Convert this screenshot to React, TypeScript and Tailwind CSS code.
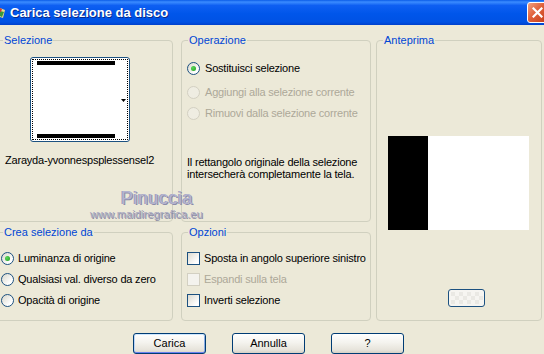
import type { ReactNode } from 'react'

const font = { fontFamily: '"Liberation Sans", Arial, sans-serif' }

function Group({
  title,
  className = '',
  children,
}: {
  title: string
  className?: string
  children?: ReactNode
}) {
  return (
    <div className={`relative rounded-[4px] border border-[#D0D0BF] ${className}`}>
      <span className="absolute -top-[7px] left-[6px] bg-[#ECE9D8] px-[1px] text-[11px] leading-[13px] text-[#0046D5]">
        {title}
      </span>
      {children}
    </div>
  )
}

function Radio({ checked = false, disabled = false }: { checked?: boolean; disabled?: boolean }) {
  return (
    <span
      className={`flex h-[13px] w-[13px] shrink-0 items-center justify-center rounded-full border ${
        disabled
          ? 'border-[#D3D0C2] bg-[#EFEDE2]'
          : 'border-[#1C5180] bg-[linear-gradient(135deg,#D9D7CB,#FFFFFF_75%)]'
      }`}
    >
      {checked && (
        <span className="h-[5px] w-[5px] rounded-full bg-[radial-gradient(circle_at_35%_35%,#5BD65B,#1E9E1E)]" />
      )}
    </span>
  )
}

function Check({ disabled = false }: { disabled?: boolean }) {
  return (
    <span
      className={`block h-[13px] w-[13px] shrink-0 border ${
        disabled
          ? 'border-[#D3D0C2] bg-[#F4F3EE]'
          : 'border-[#1C5180] bg-[linear-gradient(135deg,#DCDAD0,#FFFFFF_80%)]'
      }`}
    />
  )
}

function Option({
  control,
  label,
  disabled = false,
  gap = 'gap-[4px]',
}: {
  control: ReactNode
  label: string
  disabled?: boolean
  gap?: string
}) {
  return (
    <div className={`flex h-[13px] items-center ${gap}`}>
      {control}
      <span
        className={`whitespace-nowrap text-[11px] leading-[13px] tracking-[-0.2px] ${
          disabled ? 'text-[#ACA899]' : 'text-black'
        }`}
      >
        {label}
      </span>
    </div>
  )
}

function XpButton({ label, primary = false }: { label: string; primary?: boolean }) {
  return (
    <button
      className={`h-[21px] w-[73px] rounded-[3px] border border-[#003C74] bg-[linear-gradient(to_bottom,#FFFFFF,#F4F3EE_45%,#E6E3DA_85%,#D6D0C5)] text-[11px] text-black ${
        primary
          ? 'shadow-[inset_0_1px_0_#CEE7FF,inset_0_-1px_0_#6982EE,inset_1px_0_0_#BCD4F6,inset_-1px_0_0_#89ADE4]'
          : ''
      }`}
    >
      {label}
    </button>
  )
}

export default function App() {
  return (
    <div className="h-[354px] w-[544px] overflow-hidden bg-[#ECE9D8]" style={font}>
      {/* Title bar */}
      <div className="flex h-[25px] items-center bg-[linear-gradient(to_bottom,#0A5CE8_0%,#3B8CFF_8%,#0E5FF2_22%,#0056EA_55%,#0052E4_88%,#0040CC_100%)]">
        <svg width="6" height="14" viewBox="0 0 6 14" className="ml-0">
          <path d="M0 2 L5 4 L3 12 L0 11 Z" fill="#E8D890" />
          <path d="M0 5 L4 6 L2 11 L0 10 Z" fill="#3A9A3A" />
          <path d="M0 2 L2 3 L1 6 L0 6 Z" fill="#D04030" />
        </svg>
        <span className="ml-[4px] text-[13px] font-bold text-white [text-shadow:1px_1px_0_#0A2A8A]">
          Carica selezione da disco
        </span>
        <div className="ml-auto mr-[-4px] flex h-[21px] w-[21px] items-center justify-center rounded-[3px] border border-white bg-[linear-gradient(135deg,#F0A080,#E0603A_45%,#C33C18)]">
          <svg width="11" height="11" viewBox="0 0 11 11">
            <path d="M1.5 1.5 L9.5 9.5 M9.5 1.5 L1.5 9.5" stroke="white" strokeWidth="2.2" strokeLinecap="square" />
          </svg>
        </div>
      </div>

      {/* Body */}
      <div className="relative">
        <div className="ml-[-4px] flex pt-[15px]">
          <div className="grid grid-cols-[177px_190px] grid-rows-[182px_89px] gap-x-[8px] gap-y-[10px]">
            <Group title="Selezione">
              <div className="flex flex-col pl-[8px] pt-[16px]">
                <div className="relative ml-[25px] flex h-[85px] w-[100px] items-center justify-center rounded-[3px] border border-[#1C5180] bg-white">
                  <div className="flex h-[81px] w-[96px] flex-col justify-between border border-dotted border-black px-[4px] py-[1px]">
                    <div className="h-[4px] w-[78px] bg-black" />
                    <div className="h-[4px] w-[78px] bg-black" />
                  </div>
                  <svg width="5" height="3" viewBox="0 0 5 3" className="absolute right-[3px] top-[41px]">
                    <path d="M0 0 H5 L2.5 3 Z" fill="black" />
                  </svg>
                </div>
                <span className="mt-[12px] text-[11px] leading-[13px] tracking-[-0.2px] text-black">
                  Zarayda-yvonnespsplessensel2
                </span>
              </div>
            </Group>

            <Group title="Operazione">
              <div className="flex flex-col pl-[5px] pt-[21px]">
                <Option control={<Radio checked />} label="Sostituisci selezione" gap="gap-[5px]" />
                <div className="mt-[11px]">
                  <Option control={<Radio disabled />} label="Aggiungi alla selezione corrente" disabled gap="gap-[5px]" />
                </div>
                <div className="mt-[8px]">
                  <Option control={<Radio disabled />} label="Rimuovi dalla selezione corrente" disabled gap="gap-[5px]" />
                </div>
                <p className="mt-[36px] text-[11px] leading-[12px] tracking-[-0.2px] text-black">
                  Il rettangolo originale della selezione
                  <br />
                  intersecherà completamente la tela.
                </p>
              </div>
            </Group>

            <Group title="Crea selezione da">
              <div className="flex flex-col gap-[8px] pl-[4px] pt-[19px]">
                <Option control={<Radio checked />} label="Luminanza di origine" />
                <Option control={<Radio />} label="Qualsiasi val. diverso da zero" />
                <Option control={<Radio />} label="Opacità di origine" />
              </div>
            </Group>

            <Group title="Opzioni">
              <div className="flex flex-col gap-[8px] pl-[5px] pt-[19px]">
                <Option control={<Check />} label="Sposta in angolo superiore sinistro" />
                <Option control={<Check disabled />} label="Espandi sulla tela" disabled />
                <Option control={<Check />} label="Inverti selezione" />
              </div>
            </Group>
          </div>

          <Group title="Anteprima" className="ml-[5px] h-[281px] w-[166px]">
            <div className="flex flex-col pl-[11px] pt-[95px]">
              <div className="flex h-[94px] w-[141px]">
                <div className="w-[40px] bg-black" />
                <div className="flex-1 bg-white" />
              </div>
              <div className="ml-[60px] mt-[59px] flex h-[18px] w-[37px] items-center justify-center rounded-[3px] border border-[#1C5180] bg-[#F6F5F1]">
                <svg width="33" height="14" viewBox="0 0 33 14">
                  {[0, 1, 2, 3, 4, 5, 6, 7].map((c) =>
                    [0, 1, 2].map((r) =>
                      (c + r) % 2 === 0 ? (
                        <rect key={`${c}-${r}`} x={c * 4 + 1} y={r * 4 + 1} width="4" height="4" fill="#EAE9E4" />
                      ) : null,
                    ),
                  )}
                </svg>
              </div>
            </div>
          </Group>
        </div>

        {/* Buttons */}
        <div className="ml-[133px] mt-[12px] flex gap-[26px]">
          <XpButton label="Carica" primary />
          <XpButton label="Annulla" />
          <XpButton label="?" />
        </div>

        {/* Watermark */}
        <div className="pointer-events-none absolute left-[90px] top-[163px] flex flex-col items-start">
          <span className="ml-[31px] text-[18px] leading-[20px] tracking-[0.5px] text-[#B4B4D0] [text-shadow:1px_1px_0_#8C8CAA,-1px_0_0_#9C9CB8]">
            Pinuccia
          </span>
          <span className="text-[11px] leading-[12px] tracking-[0.1px] text-[#A8A8C0] [text-shadow:1px_1px_0_#8A8AA2]">
            www.maidiregrafica.eu
          </span>
        </div>
      </div>
    </div>
  )
}
